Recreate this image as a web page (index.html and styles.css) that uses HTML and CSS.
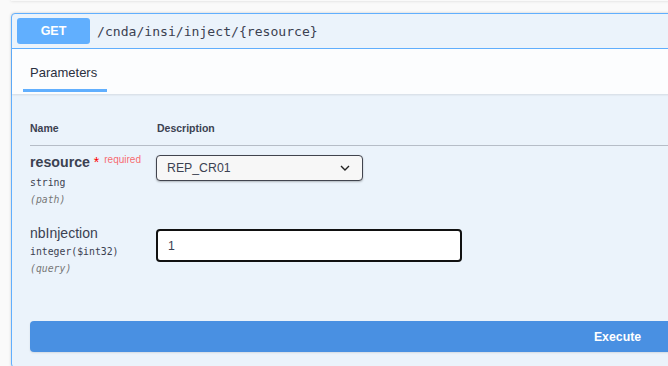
FILE: index.html
```html
<!DOCTYPE html>
<html lang="en">
    <head>
        <meta charset="UTF-8" />
        <title>cnda inject</title>
        <link rel="stylesheet" href="styles.css">
    </head>
    <body>
        <!-- 이전 블록 그림자 -->
        <div class="prev"></div>

        <div class="opblock">
            <!-- 요약줄 -->
            <div class="summary">
                <span class="method">GET</span>
                <span class="path">/cnda/insi/inject/{resource}</span>
            </div>

            <!-- 탭 헤더 -->
            <div class="tabs">
                <div class="tab">Parameters</div>
            </div>

            <!-- 파라미터 표 -->
            <div class="params">
                <div class="head">
                    <div class="col-name">Name</div>
                    <div class="col-desc">Description</div>
                </div>

                <div class="row">
                    <div class="col-name">
                        <div class="pname"><b>resource</b> <span class="star">*</span><span class="req">required</span></div>
                        <div class="ptype">string</div>
                        <div class="pin">(path)</div>
                    </div>
                    <div class="col-desc">
                        <div class="select">
                            <span>REP_CR01</span>
                            <svg width="10" height="6" viewBox="0 0 10 6"><polyline points="1,1 5,5 9,1" fill="none" stroke="#222" stroke-width="1.4"/></svg>
                        </div>
                    </div>
                </div>

                <div class="row">
                    <div class="col-name">
                        <div class="pname">nbInjection</div>
                        <div class="ptype">integer($int32)</div>
                        <div class="pin">(query)</div>
                    </div>
                    <div class="col-desc">
                        <div class="input">1</div>
                    </div>
                </div>

                <button class="execute">Execute</button>
            </div>
        </div>
    </body>
</html>
```

FILE: styles.css
```css
body {
    margin: 0;
    background-color: #fafafa;
    font-family: "Liberation Sans", Arial, sans-serif;
    color: #3b4151;
    overflow: hidden;
}

/* 위쪽 이전 블록 */
.prev {
    height: 1px;
    margin-left: 11px;
    width: 1300px;
    box-shadow: 0 0 3px rgba(0, 0, 0, .25);
}

/* 오퍼레이션 블록 */
.opblock {
    width: 1211px;
    margin: 12px 0 0 11px;
    border: 1px solid #61affe;
    border-radius: 4px;
    background-color: #ebf3fb;
    box-shadow: 0 0 3px rgba(0, 0, 0, .19);
}

.summary {
    display: flex;
    align-items: center;
    height: 34px;
    padding: 0 5px;
    border-bottom: 1px solid #61affe;
}

.method {
    width: 73px;
    height: 26px;
    line-height: 26px;
    text-align: center;
    border-radius: 3px;
    background-color: #61affe;
    color: #fff;
    font-size: 12.5px;
    font-weight: bold;
}

.path {
    margin-left: 7px;
    font-family: "DejaVu Sans Mono", "Liberation Mono", monospace;
    font-size: 13.1px;
    color: #3b4151;
}

/* 탭 */
.tabs {
    display: flex;
    height: 45px;
    padding-left: 11px;
    background-color: #fcfdfe;
    box-shadow: 0 1px 2px rgba(0, 0, 0, .1);
}

.tab {
    width: 84px;
    box-sizing: border-box;
    padding: 16px 0 0 7px;
    height: 43px;
    font-size: 13px;
    color: #2a3040;
    border-bottom: 3px solid #61affe;
}

/* 파라미터 */
.params {
    padding: 0 18px 15px;
}

.head {
    display: flex;
    padding-top: 26px;
    padding-bottom: 9px;
    line-height: 16px;
    font-size: 10.5px;
    font-weight: bold;
    border-bottom: 1px solid rgba(59, 65, 81, .3);
}

.head .col-desc {
    padding-left: 1px;
}

.row {
    display: flex;
    padding: 7px 0 10px;
}

.col-name {
    width: 126px;
    flex: none;
}

.pname {
    font-size: 14px;
    line-height: 18px;
}

.pname b {
    font-size: 14.2px;
}

.star {
    color: #f00;
}

.req {
    position: relative;
    top: -4px;
    padding-left: 5px;
    font-size: 10px;
    color: rgba(255, 0, 0, .6);
}

.ptype {
    padding: 4px 0;
    line-height: 12px;
    font-family: "DejaVu Sans Mono", "Liberation Mono", monospace;
    font-size: 9.8px;
}

.pin {
    line-height: 14px;
    font-family: "DejaVu Sans Mono", "Liberation Mono", monospace;
    font-size: 9.8px;
    font-style: italic;
    color: #777;
}

/* 셀렉트 박스 */
.select {
    display: flex;
    align-items: center;
    justify-content: space-between;
    width: 207px;
    height: 26px;
    box-sizing: border-box;
    margin-top: 2px;
    padding: 0 12px 0 10px;
    border: 1px solid #41444e;
    border-radius: 4px;
    background-color: #f7f7f7;
    box-shadow: 0 1px 2px rgba(0, 0, 0, .25);
    font-size: 12.3px;
}

/* 입력 박스 */
.input {
    width: 306px;
    height: 33px;
    box-sizing: border-box;
    margin-top: 5px;
    padding: 8px 10px;
    border: 2px solid #111;
    border-radius: 4px;
    background-color: #fff;
    font-size: 12.3px;
}

/* 실행 버튼 */
.execute {
    display: block;
    width: 100%;
    height: 31px;
    margin-top: 35px;
    border: 0;
    border-radius: 4px;
    background-color: #4990e2;
    color: #fff;
    font-family: "Liberation Sans", Arial, sans-serif;
    font-size: 12.3px;
    font-weight: bold;
    box-shadow: 0 1px 2px rgba(0, 0, 0, .1);
}
```
